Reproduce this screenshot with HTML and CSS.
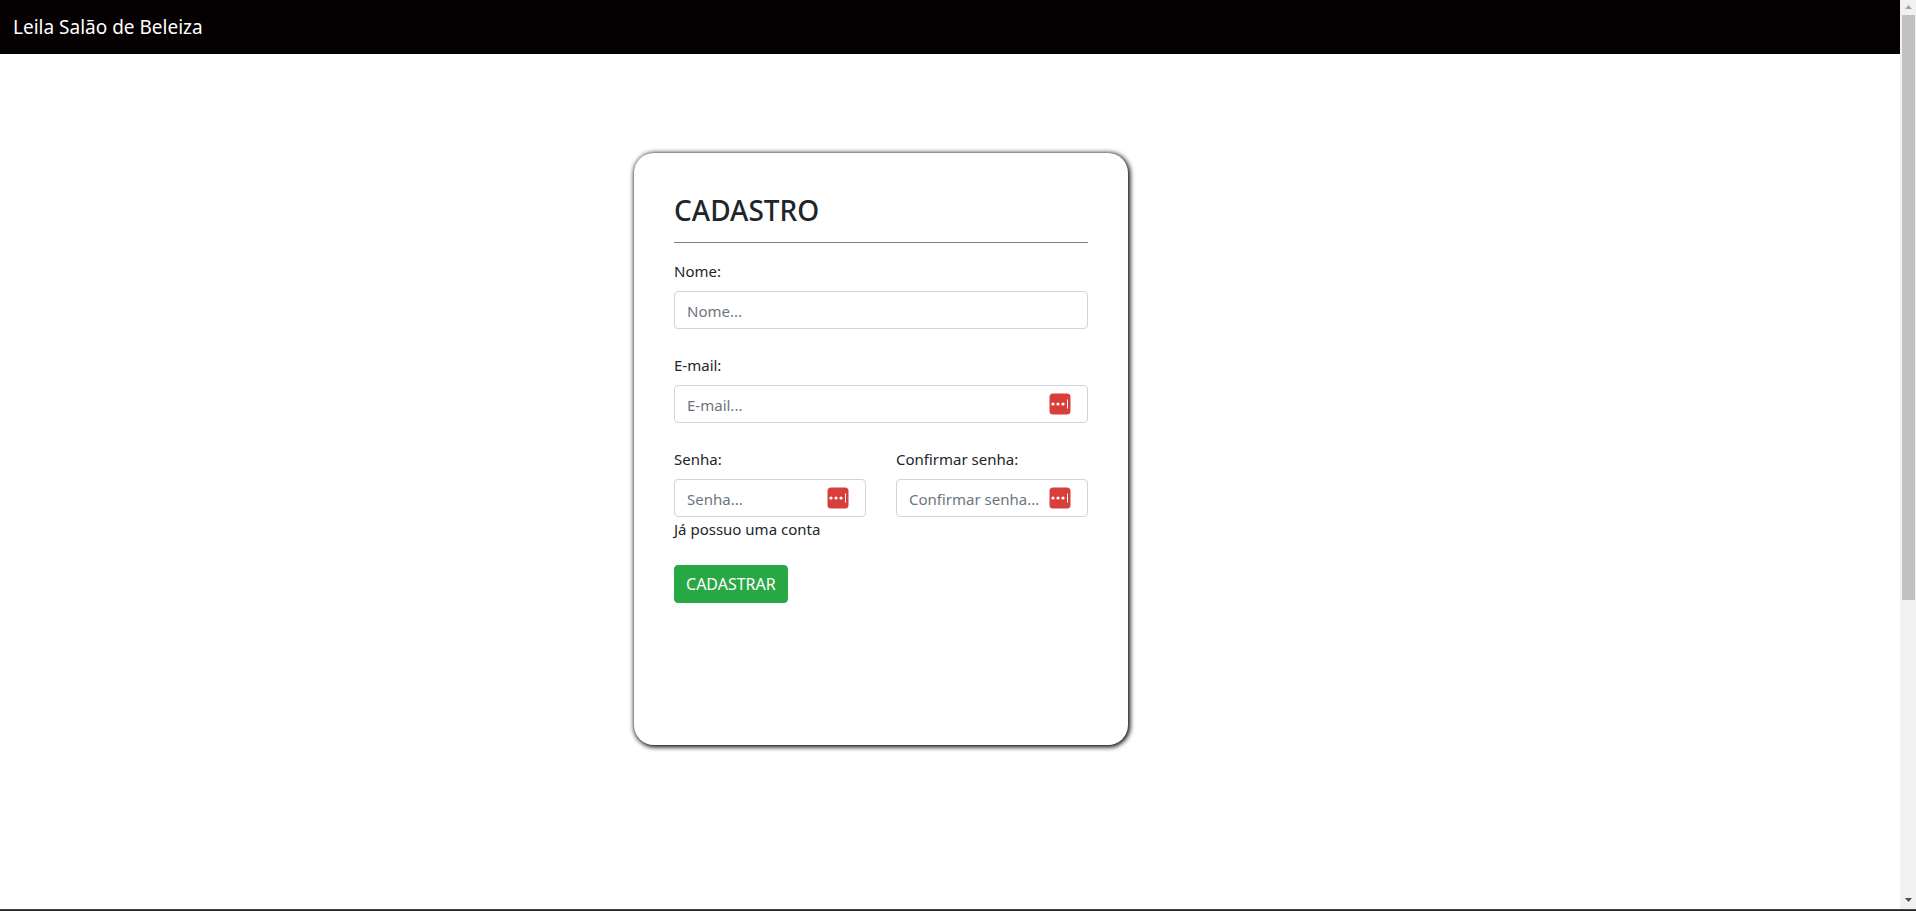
FILE: index.html
```html
<!DOCTYPE html>
<html lang="pt-BR">
<head>
  <meta charset="utf-8">
  <title>Leila Salão de Beleiza</title>
  <link rel="stylesheet" href="styles.css">
</head>
<body>
  <svg class="sprite" aria-hidden="true">
    <symbol id="vault" viewBox="0 0 22 22">
      <rect x=".5" y=".5" width="21" height="21" rx="3.500" fill="#d93f3a"/>
      <circle cx="4" cy="11" r="1.6" fill="#fff"/>
      <circle cx="9" cy="11" r="1.6" fill="#fff"/>
      <circle cx="14" cy="11" r="1.6" fill="#fff"/>
      <rect x="18" y="6.500" width="1" height="9" fill="#fff"/>
    </symbol>
  </svg>
  <div class="window">
    <div class="page">
      <header class="navbar"><a class="brand" href="#">Leila Salão de Beleiza</a></header>
      <main class="content">
        <form class="card">
          <h3 class="title">CADASTRO</h3>
          <hr class="rule">
          <div class="fields">
            <div class="field wide">
              <label for="nome">Nome:</label>
              <input id="nome" type="text" placeholder="Nome...">
            </div>
            <div class="field wide">
              <label for="email">E-mail:</label>
              <div class="control">
                <input id="email" type="email" placeholder="E-mail...">
                <svg class="vault"><use href="#vault"/></svg>
              </div>
            </div>
            <div class="field">
              <label for="senha">Senha:</label>
              <div class="control">
                <input id="senha" type="password" placeholder="Senha...">
                <svg class="vault"><use href="#vault"/></svg>
              </div>
            </div>
            <div class="field">
              <label for="confirmar">Confirmar senha:</label>
              <div class="control">
                <input id="confirmar" type="password" placeholder="Confirmar senha...">
                <svg class="vault"><use href="#vault"/></svg>
              </div>
            </div>
          </div>
          <a class="login" href="#">Já possuo uma conta</a>
          <button class="submit" type="submit">CADASTRAR</button>
        </form>
      </main>
    </div>
    <div class="scrollbar" aria-hidden="true">
      <svg class="arrow" viewBox="0 0 16 15"><path d="M5 9h7L8.500 5z" fill="#a3a3a3"/></svg>
      <div class="track"><div class="thumb"></div></div>
      <svg class="arrow" viewBox="0 0 16 15"><path d="M5 4h7L8.500 8z" fill="#505050"/></svg>
    </div>
  </div>
  <div class="edge"></div>
</body>
</html>
```
FILE: styles.css
```css
* {
  box-sizing: border-box;
}

body {
  display: flex;
  flex-direction: column;
  height: 100vh;
  margin: 0;
  overflow: hidden;
  background: #fff;
  color: #212529;
  font: 15px/24px "Noto Sans", sans-serif;
}

.sprite {
  display: none;
}

.window {
  display: flex;
  flex: 1;
  min-height: 0;
}

.page {
  flex: 1;
  overflow: hidden;
}

.navbar {
  padding: 12px 13px;
  background: #050001;
}

.brand {
  display: block;
  color: #fff;
  font-size: 19px;
  line-height: 30px;
  text-decoration: none;
}

.card {
  width: 26%;
  min-height: 65vh;
  margin: 99px 0 0 33.37%;
  padding: 40px;
  border-radius: 20px;
  background: #fff;
  box-shadow: 1px 1px 5px 1px #000;
}

.title {
  margin: 0;
  font-size: 28px;
  font-weight: 500;
  line-height: 34px;
}

.rule {
  height: 1px;
  margin: 15px 0 16px;
  border: 0;
  background: #7f7f7f;
}

.fields {
  display: grid;
  grid-template-columns: 1fr 1fr;
  gap: 24px 30px;
}

.wide {
  grid-column: 1 / -1;
}

.field label {
  display: block;
  margin-bottom: 8px;
}

.field input {
  display: block;
  width: 100%;
  height: 38px;
  padding: 7px 12px 5px;
  border: 1px solid #ced4da;
  border-radius: 4px;
  background: #fff;
  color: #495057;
  font: inherit;
}

.field input::placeholder {
  color: #6c757d;
  opacity: 1;
}

.control {
  position: relative;
}

.vault {
  position: absolute;
  top: 8px;
  right: 17px;
  width: 22px;
  height: 22px;
}

.login {
  display: block;
  color: #212529;
  text-decoration: none;
}

.submit {
  display: block;
  height: 38px;
  margin-top: 24px;
  padding: 5px 11px;
  border: 1px solid #28a745;
  border-radius: 4px;
  background: #28a745;
  color: #fff;
  font: inherit;
  font-size: 16px;
}

.scrollbar {
  display: flex;
  flex-direction: column;
  width: 16px;
  background: #f1f1f1;
}

.arrow {
  width: 16px;
  height: 15px;
}

.track {
  flex: 1;
  padding: 0 1px 0 2px;
}

.thumb {
  height: 66.6%;
  background: #c1c1c1;
}

.edge {
  height: 2px;
  border-top: 1px solid #48484a;
  background: #222;
}
```
